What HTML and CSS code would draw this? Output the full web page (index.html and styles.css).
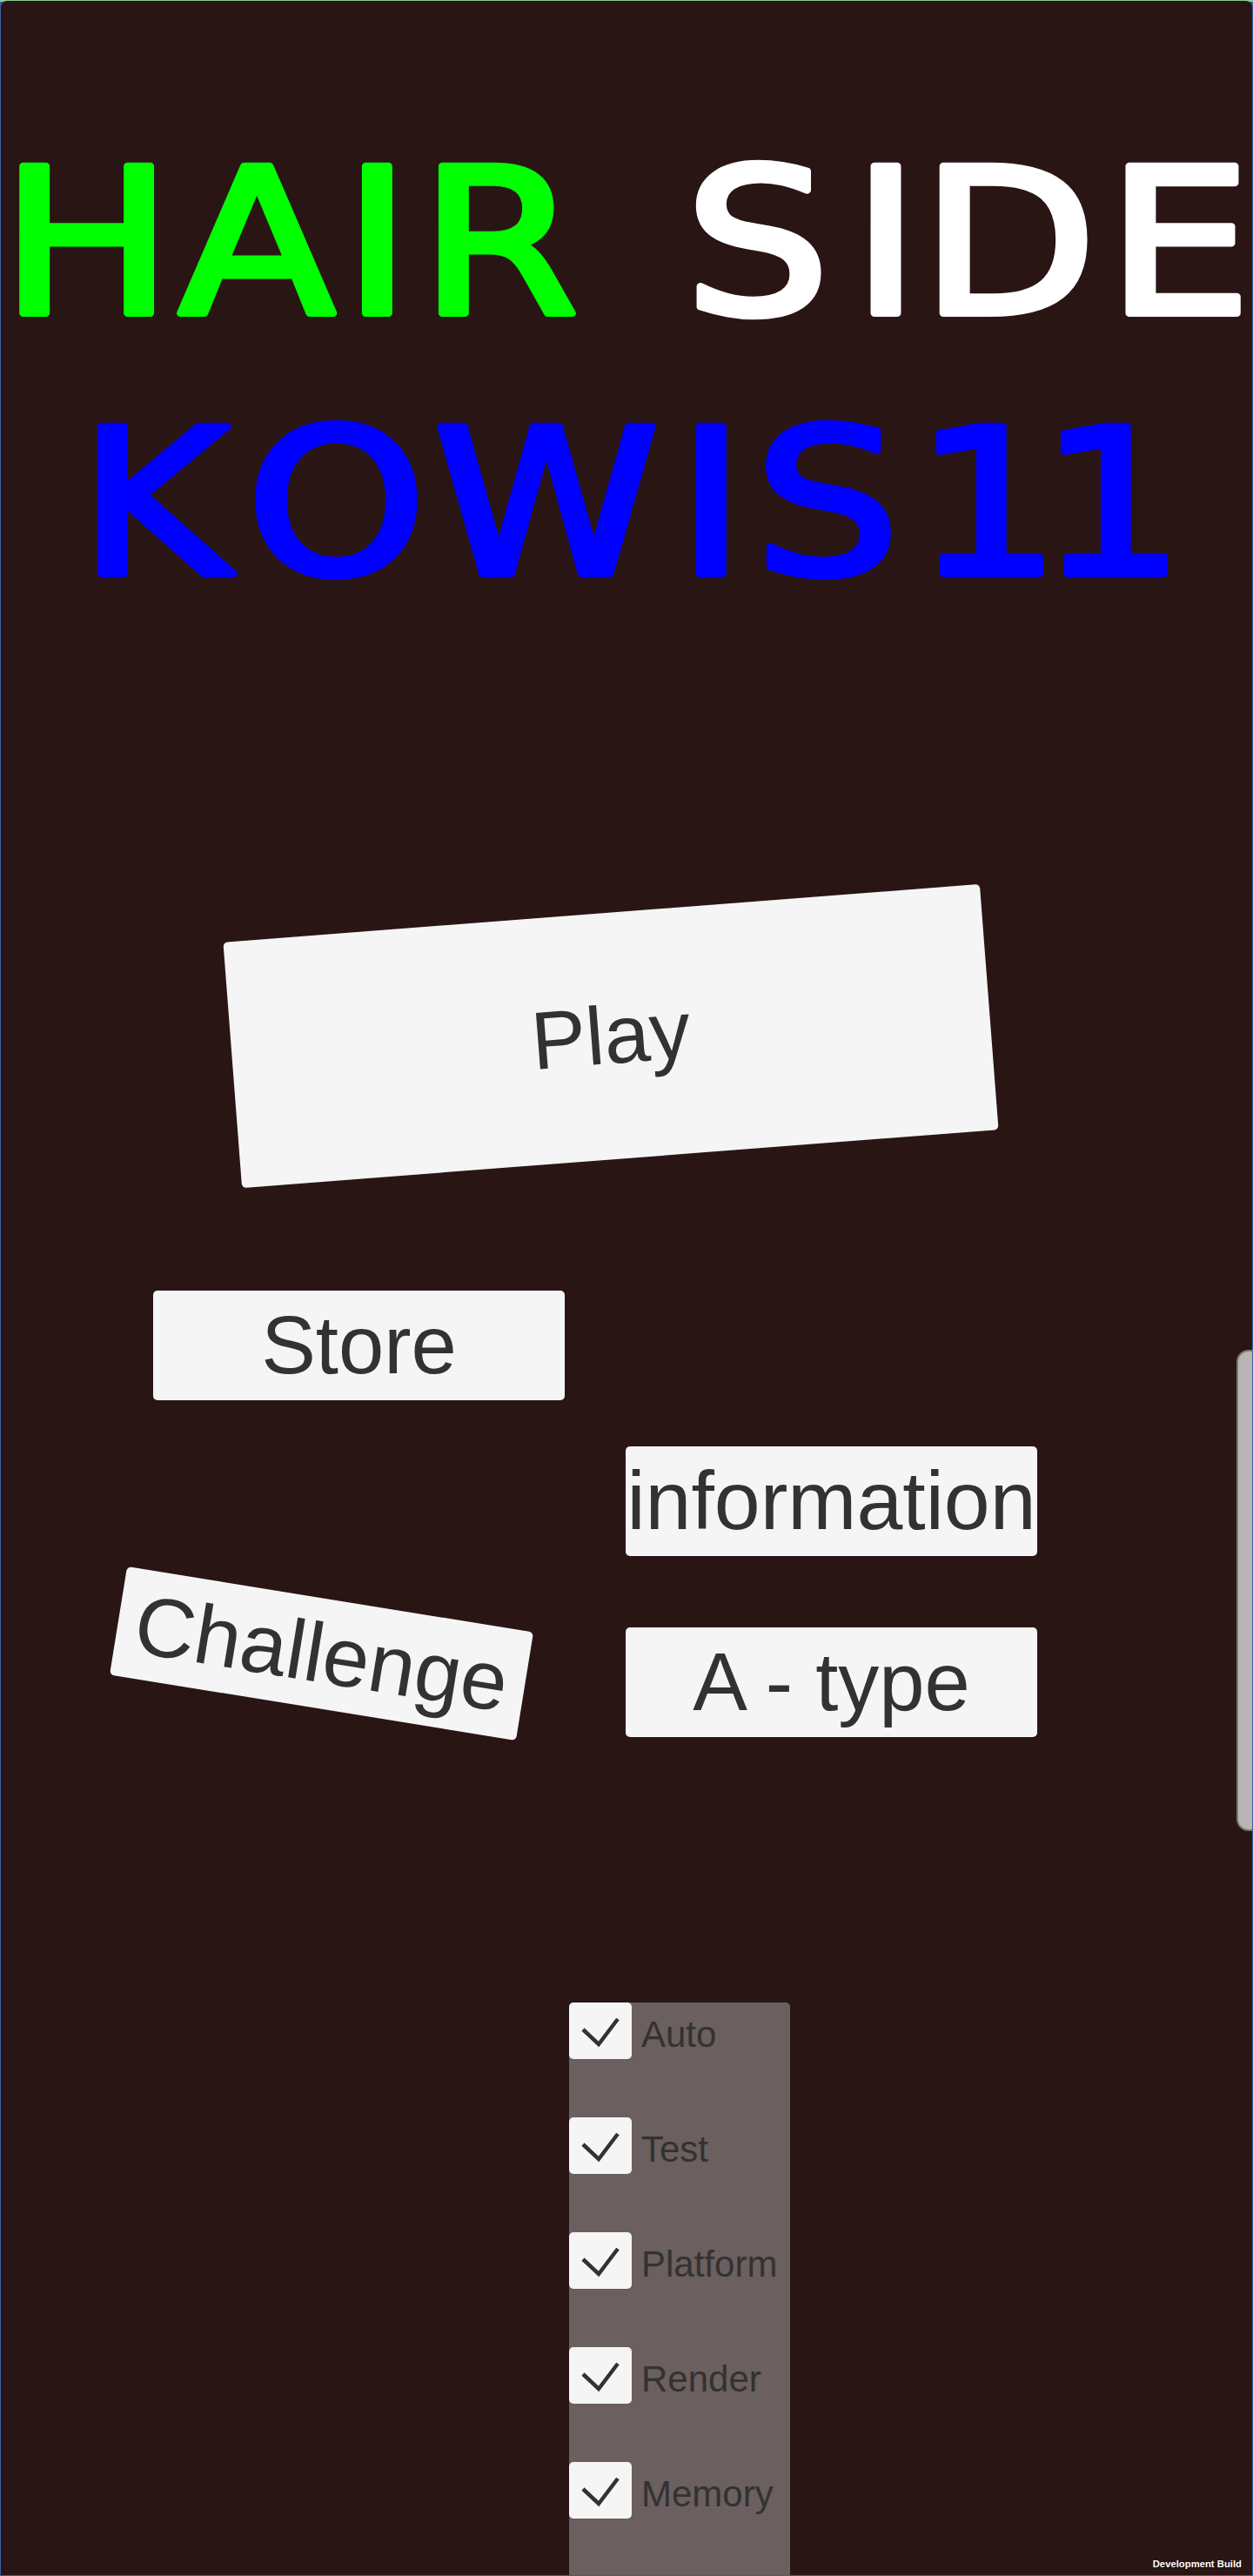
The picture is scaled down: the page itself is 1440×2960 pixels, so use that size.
FILE: index.html
```html
<!DOCTYPE html>
<html lang="en">
<head>
<meta charset="utf-8">
<title>HAIR SIDE</title>
<link rel="stylesheet" href="styles.css">
</head>
<body>
<div class="screen">
  <header class="title">
    <svg class="title-svg line1" width="1438" height="400" viewBox="0 0 1438 400">
      <text class="title-text" transform="scale(1.131 1)"><tspan class="green" x="0 180.8 348.1 425.9" y="359">HAIR</tspan> <tspan class="white" x="695 865 935 1124" y="359">SIDE</tspan></text>
    </svg>
    <svg class="title-svg line2" width="1438" height="300" viewBox="0 0 1438 300">
      <text class="title-text blue" transform="scale(1.131 1)" x="79.3 249.5 439.5 687.5 766 929 1055.4" y="258">KOWIS11</text>
    </svg>
  </header>

  <div class="btn play">Play</div>
  <div class="btn store">Store</div>
  <div class="btn info">information</div>
  <div class="pair-row">
    <div class="btn challenge">Challenge</div>
    <div class="btn atype">A - type</div>
  </div>

  <div class="toggles">
    <div class="toggle"><span class="box"><svg viewBox="0 0 72 65" width="72" height="65"><polyline points="16,31 34,48 56,19" /></svg></span><span class="label">Auto</span></div>
    <div class="toggle"><span class="box"><svg viewBox="0 0 72 65" width="72" height="65"><polyline points="16,31 34,48 56,19" /></svg></span><span class="label">Test</span></div>
    <div class="toggle"><span class="box"><svg viewBox="0 0 72 65" width="72" height="65"><polyline points="16,31 34,48 56,19" /></svg></span><span class="label">Platform</span></div>
    <div class="toggle"><span class="box"><svg viewBox="0 0 72 65" width="72" height="65"><polyline points="16,31 34,48 56,19" /></svg></span><span class="label">Render</span></div>
    <div class="toggle"><span class="box"><svg viewBox="0 0 72 65" width="72" height="65"><polyline points="16,31 34,48 56,19" /></svg></span><span class="label">Memory</span></div>
  </div>

  <div class="edge-handle"></div>
  <div class="dev-build">Development Build</div>
</div>
</body>
</html>
```
FILE: styles.css
```css
html, body {
  margin: 0;
  padding: 0;
  width: 1440px;
  height: 2960px;
  overflow: hidden;
}

body {
  background: linear-gradient(to bottom, #86d08e 0, #86d08e 2px, #3d5ea6 2px);
}

.screen {
  position: relative;
  box-sizing: border-box;
  width: 1438px;
  height: 2958px;
  margin: 1px 1px 1px 1px;
  background: #2a1515;
  border-radius: 7px 7px 0 0;
  overflow: hidden;
  display: flex;
  flex-direction: column;
  align-items: flex-start;
}

.title {
  display: flex;
  flex-direction: column;
  align-items: flex-start;
}

.title-svg {
  display: block;
  overflow: visible;
}

.title-text {
  font-family: "DejaVu Sans", sans-serif;
  font-weight: 400;
  font-size: 232px;
  stroke-width: 8px;
  stroke-linejoin: round;
}

.green {
  fill: #00ff00;
  stroke: #00ff00;
}

.white {
  fill: #ffffff;
  stroke: #ffffff;
}

.blue {
  fill: #0000ff;
  stroke: #0000ff;
}

.btn {
  flex: none;
  box-sizing: border-box;
  display: flex;
  align-items: center;
  justify-content: center;
  background: #f5f5f5;
  color: #323232;
  font-family: "Liberation Sans", Arial, sans-serif;
  font-size: 94px;
  line-height: 1.15;
  border-radius: 5px;
  white-space: nowrap;
  width: 473px;
  height: 126px;
}

.play {
  margin: 348px 0 0 265px;
  width: 872px;
  height: 283px;
  transform: rotate(-4.4deg);
}

.store {
  margin: 151px 0 0 175px;
}

.info {
  margin: 53px 0 0 718px;
  font-size: 95px;
}

.pair-row {
  display: flex;
  align-items: flex-start;
}

.challenge {
  margin: 49px 0 0 132px;
  font-size: 96px;
  transform: rotate(9.2deg);
}

.atype {
  margin: 82px 0 0 113px;
}

.toggles {
  margin: 305px 0 0 653px;
  width: 254px;
  height: 660px;
  background: #6b5f5f;
  border-radius: 5px 5px 0 0;
  display: flex;
  flex-direction: column;
  gap: 67px;
}

.toggle {
  display: flex;
  align-items: flex-start;
  height: 65px;
}

.box {
  flex: none;
  width: 72px;
  height: 65px;
  background: #f5f5f5;
  border-radius: 5px;
}

.box svg {
  display: block;
}

.box polyline {
  fill: none;
  stroke: #323232;
  stroke-width: 4.5;
  stroke-linejoin: miter;
}

.label {
  margin-left: 11px;
  padding-top: 13px;
  font-family: "Liberation Sans", Arial, sans-serif;
  font-size: 42px;
  line-height: 48px;
  color: #323232;
  white-space: nowrap;
}

.edge-handle {
  position: absolute;
  left: 1420px;
  top: 1550px;
  width: 40px;
  height: 553px;
  box-sizing: border-box;
  background: #b9b5b5;
  border: 2px solid #7d7777;
  border-radius: 14px;
}

.dev-build {
  position: absolute;
  right: 12px;
  bottom: 7px;
  font-family: "Liberation Sans", Arial, sans-serif;
  font-weight: 700;
  font-size: 11.3px;
  color: #ffffff;
  text-shadow: 1px 1px 0 rgba(0, 0, 0, 0.8);
  white-space: nowrap;
}
```
